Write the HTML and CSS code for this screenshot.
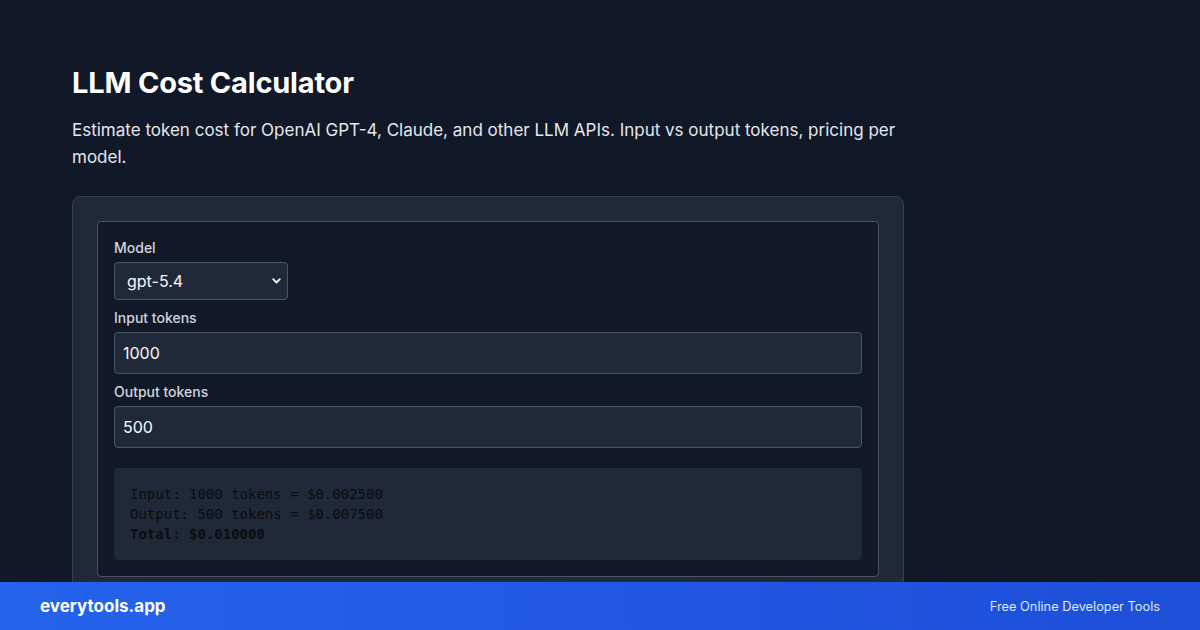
FILE: index.html
```html
<!DOCTYPE html>
<html lang="en">
<head>
<meta charset="utf-8">
<title>LLM Cost Calculator</title>
<link rel="stylesheet" href="styles.css">
</head>
<body>
<main class="page">
  <h1 class="title">LLM Cost Calculator</h1>
  <p class="subtitle">Estimate token cost for OpenAI GPT-4, Claude, and other LLM APIs. Input vs output tokens, pricing per model.</p>
  <section class="card">
    <div class="panel">
      <label class="label" for="model">Model</label>
      <div class="select" id="model">
        <span class="select-value">gpt-5.4</span>
        <svg class="chev" width="9" height="6" viewBox="0 0 9 6"><path d="M1.2 1.2 L4.5 4.5 L7.8 1.2" fill="none" stroke="#f3f4f6" stroke-width="1.8" stroke-linecap="round" stroke-linejoin="round"/></svg>
      </div>
      <label class="label" for="in">Input tokens</label>
      <div class="field" id="in">1000</div>
      <label class="label" for="out">Output tokens</label>
      <div class="field" id="out">500</div>
      <pre class="result">Input: 1000 tokens = $0.002500
Output: 500 tokens = $0.007500
<b>Total: $0.010000</b></pre>
    </div>
  </section>
</main>
<footer class="footer">
  <span class="brand">everytools.app</span>
  <span class="tagline">Free Online Developer Tools</span>
</footer>
</body>
</html>
```

FILE: styles.css
```css
* { box-sizing: border-box; }
html, body { margin: 0; padding: 0; }
body {
  background: #111827;
  color: #f3f4f6;
  font-family: Inter, "Noto Sans", "Liberation Sans", sans-serif;
  width: 1200px;
  height: 630px;
  overflow: hidden;
}
.page {
  padding: 63px 72px 0;
  width: 976px;
}
.title {
  margin: 0;
  font-size: 29px;
  line-height: 40px;
  font-weight: 700;
  color: #ffffff;
  letter-spacing: -0.2px;
}
.subtitle {
  margin: 14px 0 25px;
  font-size: 17px;
  line-height: 27px;
  color: #e5e7eb;
  max-width: 832px;
}
.card {
  background: #1f2937;
  border: 1px solid #374151;
  border-radius: 8px;
  padding: 24px;
  width: 832px;
}
.panel {
  background: #111827;
  border: 1px solid #4b5563;
  border-radius: 4px;
  padding: 16px;
  display: flex;
  flex-direction: column;
}
.label {
  font-size: 14px;
  line-height: 20px;
  font-weight: 500;
  color: #d1d5db;
  margin-bottom: 4px;
}
.select {
  width: 174px;
  height: 38px;
  background: #1f2937;
  border: 1px solid #4b5563;
  border-radius: 4px;
  display: flex;
  align-items: center;
  justify-content: space-between;
  padding: 0 6px 0 12px;
  font-size: 16px;
  color: #f9fafb;
  margin-bottom: 8px;
}
.field {
  height: 42px;
  background: #1f2937;
  border: 1px solid #4b5563;
  border-radius: 4px;
  display: flex;
  align-items: center;
  padding: 0 8px;
  font-size: 16px;
  color: #f9fafb;
  margin-bottom: 8px;
}
.result {
  margin: 12px 0 0;
  background: #1f2937;
  border-radius: 4px;
  padding: 16px;
  font-family: "DejaVu Sans Mono", "Liberation Mono", monospace;
  font-size: 14px;
  line-height: 20px;
  color: #0b0d12;
  height: 92px;
}
.result b { font-weight: 700; color: #0b0d12; }
.footer {
  position: fixed;
  left: 0;
  bottom: 0;
  width: 1200px;
  height: 48px;
  background: linear-gradient(90deg, #2563eb, #1d4ed8);
  display: flex;
  align-items: center;
  justify-content: space-between;
  padding: 0 40px;
}
.brand {
  font-size: 17px;
  font-weight: 700;
  color: #ffffff;
}
.tagline {
  font-size: 12.8px;
  color: #dbeafe;
}
```
